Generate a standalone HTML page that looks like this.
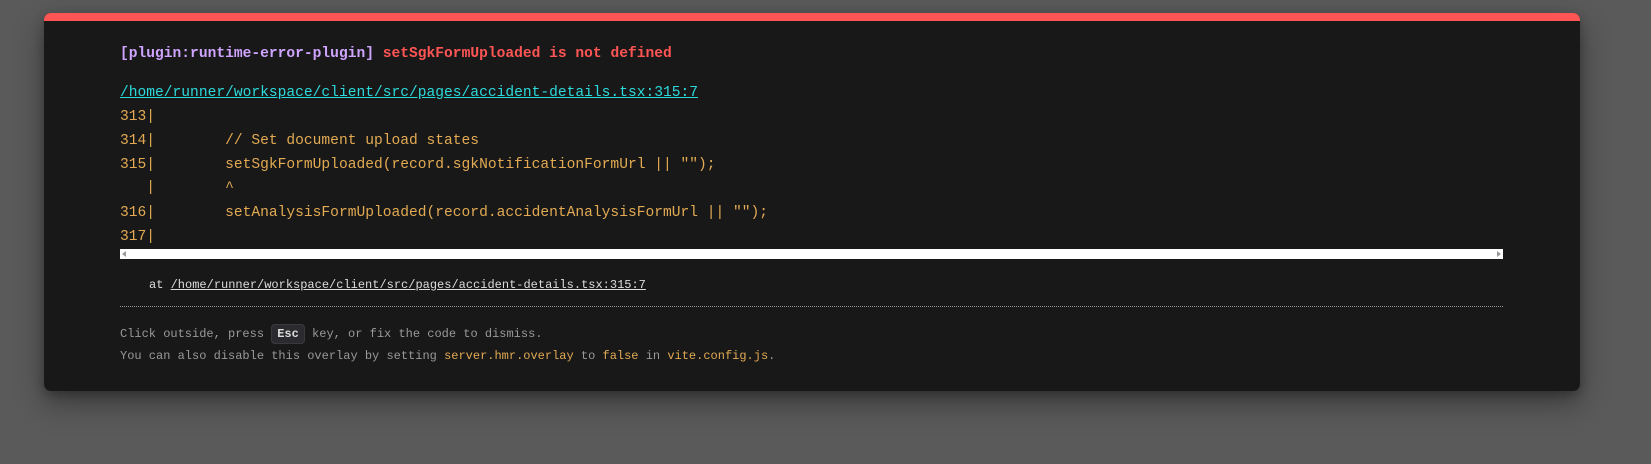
<!DOCTYPE html>
<html><head><meta charset="utf-8"><style>
html,body{margin:0;padding:0;width:1651px;height:464px;overflow:hidden;background:#5a5a5a;}
.panel{position:absolute;left:44px;top:13px;width:1536px;height:378px;background:#181818;border-radius:7px;overflow:hidden;box-shadow:0 12px 30px rgba(0,0,0,.35),0 4px 10px rgba(0,0,0,.25);}
.panel:before{content:"";position:absolute;left:0;top:0;right:0;height:8px;background:#ff5555;}
.l{position:absolute;left:76px;white-space:pre;font-family:"Liberation Mono",monospace;font-size:14.6px;line-height:20px;}
.c{color:#e2aa53;}
.f{font-size:12px;color:#999;}
.y{color:#e2aa53;}
.sb{position:absolute;left:76px;top:236px;width:1383px;height:10px;background:#fff;}
.sb i{position:absolute;top:2px;width:0;height:0;border-top:3px solid transparent;border-bottom:3px solid transparent;}
.dot{position:absolute;left:76px;top:293px;width:1383px;border-top:1px dotted #999;}
kbd{font-family:"Liberation Mono",monospace;font-size:12px;font-weight:bold;color:#ddd;background:#2b2b2f;border-radius:4px;padding:2px 5px;border:1px solid #3a3a3e;}
</style></head><body>
<div class="panel">
<div class="l" style="top:31px;font-weight:bold"><span style="color:#cfa4ff">[plugin:runtime-error-plugin]</span> <span style="color:#ff5555">setSgkFormUploaded is not defined</span></div>
<div class="l" style="top:70px;color:#2dd9da;text-decoration:underline">/home/runner/workspace/client/src/pages/accident-details.tsx:315:7</div>
<div class="l c" style="top:94px">313|</div>
<div class="l c" style="top:118px">314|        // Set document upload states</div>
<div class="l c" style="top:142px">315|        setSgkFormUploaded(record.sgkNotificationFormUrl || "");</div>
<div class="l c" style="top:165px">   |        ^</div>
<div class="l c" style="top:190px">316|        setAnalysisFormUploaded(record.accidentAnalysisFormUrl || "");</div>
<div class="l c" style="top:214px">317|</div>
<div class="sb"><i style="left:2px;border-right:4px solid #999"></i><i style="right:2px;border-left:4px solid #999"></i></div>
<div class="l f" style="top:262px;left:105px;color:#ddd">at <span style="text-decoration:underline">/home/runner/workspace/client/src/pages/accident-details.tsx:315:7</span></div>
<div class="dot"></div>
<div class="l f" style="top:311px">Click outside, press <kbd>Esc</kbd> key, or fix the code to dismiss.</div>
<div class="l f" style="top:333px">You can also disable this overlay by setting <span class="y">server.hmr.overlay</span> to <span class="y">false</span> in <span class="y">vite.config.js</span>.</div>
</div>
</body></html>
